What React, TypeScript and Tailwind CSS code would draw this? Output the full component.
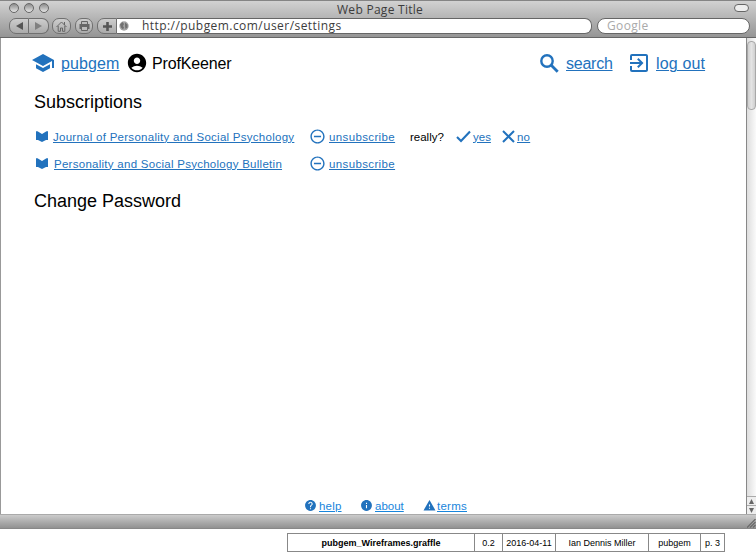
import type { ReactNode } from "react";
import {
  MdSchool,
  MdAccountCircle,
  MdExitToApp,
  MdRemoveCircleOutline,
  MdHelp,
  MdInfo,
  MdWarning,
} from "react-icons/md";

function Link({ className, children }: { className: string; children: ReactNode }) {
  return (
    <a
      href="#"
      className={`shrink-0 whitespace-nowrap underline decoration-1 ${className}`}
    >
      {children}
    </a>
  );
}

function WindowDot() {
  return (
    <span className="h-[10px] w-[10px] rounded-full border border-[#666] bg-linear-to-b from-[#8c8c8c] to-[#e6e6e6]" />
  );
}

const toolButton =
  "flex h-4 items-center justify-center border border-[#707070] bg-linear-to-b from-[#cdcdcd] to-[#aaaaaa]";

function TitleBar() {
  return (
    <header className="h-[38px] shrink-0 border-t border-b border-t-[#858585] border-b-[#666] bg-linear-to-b from-[#d2d2d2] to-[#959595] font-['Lucida_Grande','Open_Sans',sans-serif] text-[#3c3c3c]">
      <div className="flex h-[17px] items-start pt-[2px] pl-[9px] pr-[7px]">
        <div className="flex w-[328px] gap-[5px]">
          <WindowDot />
          <WindowDot />
          <WindowDot />
        </div>
        <span className="-mt-px text-[12px] leading-[16px] tracking-[0.28px] whitespace-nowrap">Web Page Title</span>
        <span className="mt-px ml-auto h-[8px] w-[15px] rounded-full border border-[#666] bg-[#eee]" />
      </div>
      <div className="flex h-4 pl-[9px] pr-[6px]">
        <div className={`${toolButton} w-[20px] rounded-l-[7px]`}>
          <svg width="7" height="8" viewBox="0 0 7 8"><path d="M7 0v8L0 4z" fill="#555" /></svg>
        </div>
        <div className={`${toolButton} w-[20px] rounded-r-[7px] border-l-0`}>
          <svg width="7" height="8" viewBox="0 0 7 8"><path d="M0 0v8l7-4z" fill="#808080" /></svg>
        </div>
        <div className={`${toolButton} ml-[3px] w-[19px] rounded-[7px]`}>
          <svg width="11" height="11" viewBox="0 0 11 11" fill="none" stroke="#666">
            <path d="M.5 6l5-5 5 5M2.2 5v5.3h2.3V7h2v3.3h2.3V5M8.5 1v3" />
          </svg>
        </div>
        <div className={`${toolButton} ml-[4px] w-[18px] rounded-[7px]`}>
          <svg width="11" height="10" viewBox="0 0 11 10">
            <path d="M2.5 3V.5h6V3M2.5 6v3.5h6V6" fill="#bbb" stroke="#666" />
            <path d="M.5 3h10v5h-2V6h-6v2h-2z" fill="#666" />
          </svg>
        </div>
        <div className={`${toolButton} ml-[4px] w-[20px] rounded-l-[7px]`}>
          <svg width="9" height="9" viewBox="0 0 9 9"><path d="M4.5 0v9M0 4.5h9" stroke="#555" strokeWidth="2.6" /></svg>
        </div>
        <div className="flex h-4 w-[475px] items-center rounded-r-[7px] border border-l-0 border-[#666] bg-white">
          <svg className="ml-[2px] shrink-0" width="10" height="10" viewBox="0 0 10 10">
            <circle cx="5" cy="5" r="4.7" fill="#a5a5a5" />
            <path d="M1 3.5L3.500 1L5 3L4 5L5 6.500L4 8.500L2 6.500zM6 1.500l2.500 2v3L6.500 8L6 5z" fill="#707070" />
          </svg>
          <span className="ml-[13px] text-[12px] leading-[14px] tracking-[0.44px] whitespace-nowrap">
            http://pubgem.com/user/settings
          </span>
        </div>
        <div className="ml-[5px] flex h-4 w-[153px] items-center rounded-full border border-[#666] bg-white pl-[9px] text-[12px] leading-[14px] tracking-[0.35px] text-[#aaa]">
          Google
        </div>
      </div>
    </header>
  );
}

function Journal({ className, title, children }: { className: string; title: string; children?: ReactNode }) {
  return (
    <div className="flex h-[27px] items-center pl-[35px] text-[11.5px] leading-[14px] text-[#2272bd]">
      <svg className="shrink-0" width="12" height="11" viewBox="0 0 12 11">
        <path d="M0 .3H1.500L6 3L10.500 .3H12V9H10L6 11L2 9H0z" fill="#2272bd" />
      </svg>
      <Link className={`tracking-[0.27px] underline-offset-1 ${className}`}>{title}</Link>
      <MdRemoveCircleOutline className="h-[17px] w-[17px] shrink-0" />
      <Link className="ml-[3px] w-[81px] tracking-[0.37px] underline-offset-1">unsubscribe</Link>
      {children}
    </div>
  );
}

function Scrollbar() {
  return (
    <div className="flex w-[10px] shrink-0 flex-col border-l border-[#888] bg-linear-to-r from-[#dedede] to-[#fafafa]">
      <div className="mt-[3px] h-[69px] rounded-[4px] border border-[#a8a8a8] bg-linear-to-r from-[#cfcfcf] via-[#e4e4e4] to-[#cfcfcf]" />
      <div className="mt-auto flex h-[9px] items-center justify-center border-t border-[#aaa] bg-[#eee]">
        <svg width="5" height="5" viewBox="0 0 5 5"><path d="M2.500 0L5 5H0z" fill="#666" /></svg>
      </div>
      <div className="flex h-[9px] items-center justify-center border-t border-[#aaa] bg-[#eee]">
        <svg width="5" height="5" viewBox="0 0 5 5"><path d="M2.500 5L5 0H0z" fill="#666" /></svg>
      </div>
    </div>
  );
}

export default function App() {
  return (
    <div className="flex h-[554px] w-[756px] flex-col overflow-hidden bg-white font-['Liberation_Sans',Arial,sans-serif] text-black">
      <TitleBar />
      <div className="flex min-h-0 flex-1 border-l border-[#999]">
        <main className="flex min-w-0 flex-1 flex-col">
          <nav className="mt-[13px] flex h-6 items-center text-[16px] leading-[20px] text-[#2272bd]">
            <MdSchool className="ml-[30px] h-6 w-6 shrink-0" />
            <Link className="mt-[2px] ml-[6px] w-[63px] tracking-[0.1px] underline-offset-1">pubgem</Link>
            <MdAccountCircle className="ml-[2px] h-[22px] w-[22px] shrink-0 text-black" />
            <span className="mt-[2px] ml-[4px] w-[388px] text-black tracking-[-0.15px]">ProfKeener</span>
            <svg className="mr-[3px] shrink-0" width="19" height="19" viewBox="0 0 19 19" fill="none" stroke="currentColor">
              <circle cx="7" cy="7" r="5.700" strokeWidth="2.400" />
              <path d="M11 11L17.700 17.700" strokeWidth="2.800" />
            </svg>
            <Link className="mt-[2px] ml-[4px] w-[60px] tracking-[-0.25px] underline-offset-1">search</Link>
            <MdExitToApp className="ml-px h-6 w-6 shrink-0" />
            <Link className="mt-[2px] ml-[5px] tracking-[0.15px] underline-offset-1">log out</Link>
          </nav>
          <h1 className="mt-[16px] pl-[33px] text-[18px] leading-[22px]">Subscriptions</h1>
          <div className="mt-[10px] flex flex-col">
            <Journal className="ml-[5px] w-[256px]" title="Journal of Personality and Social Psychology">
              <span className="w-[46px] text-black">really?</span>
              <svg className="mr-[2px] shrink-0" width="15" height="13" viewBox="0 0 15 13" fill="none" stroke="currentColor" strokeWidth="2.100">
                <path d="M1 7L5 11L14 1.500" />
              </svg>
              <Link className="w-[29px] underline-offset-1">yes</Link>
              <svg className="mr-[2px] shrink-0" width="13" height="13" viewBox="0 0 13 13" fill="none" stroke="currentColor" strokeWidth="2">
                <path d="M1 1L12 12M12 1L1 12" />
              </svg>
              <Link className="tracking-[0.2px] underline-offset-1">no</Link>
            </Journal>
            <Journal className="ml-[6px] w-[255px]" title="Personality and Social Psychology Bulletin" />
          </div>
          <h1 className="mt-[13px] pl-[33px] text-[18px] leading-[22px]">Change Password</h1>
          <footer className="mt-auto flex h-[17px] items-center pl-[303px] text-[11.5px] leading-[14px] text-[#1785dc]">
            <MdHelp className="h-[13px] w-[13px] shrink-0 text-[#2272bd]" />
            <Link className="ml-[2px] w-[41px] tracking-[0.2px] underline-offset-1">help</Link>
            <MdInfo className="h-[13px] w-[13px] shrink-0 text-[#2272bd]" />
            <Link className="ml-[2px] w-[48px] underline-offset-1">about</Link>
            <MdWarning className="h-[13px] w-[13px] shrink-0 text-[#2272bd]" />
            <Link className="ml-px tracking-[0.25px] underline-offset-1">terms</Link>
          </footer>
        </main>
        <Scrollbar />
      </div>
      <div className="flex h-[15px] shrink-0 items-end justify-end border-t border-b border-t-[#aaa] border-b-[#888] bg-linear-to-b from-[#cbcbcb] to-[#929292]">
        <svg width="9" height="9" viewBox="0 0 9 9"><path d="M0 8.500L8.500 0M3 8.500L8.500 3M6 8.500L8.500 6" stroke="#686868" strokeWidth="1.2" /></svg>
      </div>
      <div className="flex h-[25px] shrink-0 items-start pt-[4px] pl-[287px] text-[9px] leading-[18px]">
        <div className="flex h-[19px] divide-x divide-[#888] border border-[#888] text-center whitespace-nowrap">
          <div className="w-[187px] font-bold">pubgem_Wireframes.graffle</div>
          <div className="w-[28px]">0.2</div>
          <div className="w-[53px]">2016-04-11</div>
          <div className="w-[93px]">Ian Dennis Miller</div>
          <div className="w-[52px]">pubgem</div>
          <div className="w-[23px]">p. 3</div>
        </div>
      </div>
    </div>
  );
}
